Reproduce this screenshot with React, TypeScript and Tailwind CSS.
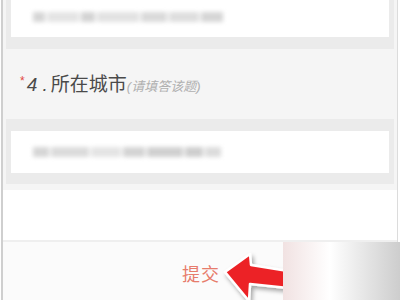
export default function App() {
  return (
    <div
      className="relative w-[400px] h-[300px] overflow-hidden bg-white"
      style={{ fontFamily: '"Liberation Sans", "Noto Sans CJK SC", sans-serif' }}
    >
      <div className="flex flex-col h-full ml-[1px] mr-[2px] border-l-2 border-r border-l-[#cfcfcf] border-r-[#dcdcdc]">
        {/* question area */}
        <div className="bg-[#f5f5f5] pt-0 pb-[6px] px-[3px]">
          <div className="bg-[#ebebeb] pb-[12px] px-[5px]">
            <div className="bg-white h-[37px] flex items-center pl-[22px] pb-[4px]">
              <div className="flex gap-[2px] blur-[2px]">
                <div className="w-[12px] h-[10px] bg-[#d6d6d6]" />
                <div className="w-[32px] h-[10px] bg-[#e4e4e4]" />
                <div className="w-[14px] h-[10px] bg-[#d4d4d4]" />
                <div className="w-[42px] h-[10px] bg-[#e2e2e2]" />
                <div className="w-[26px] h-[10px] bg-[#dadada]" />
                <div className="w-[30px] h-[10px] bg-[#dedede]" />
                <div className="w-[22px] h-[10px] bg-[#d6d6d6]" />
              </div>
            </div>
          </div>
          <div className="flex items-baseline h-[70px] pt-[22px] pl-[14px]">
            <span className="text-[12px] text-[#e2483e] relative top-[-6px]">*</span>
            <span className="text-[19px] text-[#4a4a4a] italic ml-[2px]">4 .</span>
            <span className="text-[19px] text-[#4a4a4a] ml-[3px]">所在城市</span>
            <span className="text-[13px] text-[#b0b0b0] italic">(请填答该题)</span>
          </div>
          <div className="bg-[#ebebeb] pt-[12px] pb-[11px] px-[5px]">
            <div className="bg-white h-[42px] flex items-center pl-[22px]">
              <div className="flex gap-[2px] blur-[2px]">
                <div className="w-[16px] h-[10px] bg-[#d6d6d6]" />
                <div className="w-[38px] h-[10px] bg-[#dbdbdb]" />
                <div className="w-[30px] h-[10px] bg-[#e4e4e4]" />
                <div className="w-[22px] h-[10px] bg-[#d4d4d4]" />
                <div className="w-[36px] h-[10px] bg-[#d0d0d0]" />
                <div className="w-[18px] h-[10px] bg-[#cecece]" />
                <div className="w-[16px] h-[10px] bg-[#dcdcdc]" />
              </div>
            </div>
          </div>
        </div>
        {/* blank */}
        <div className="h-[52px] bg-white border-b-2 border-[#efefef]" />
        {/* footer */}
        <div className="flex-1 bg-[#fbfbfb] flex items-start justify-center pt-[20px] pl-[2px]">
          <span className="text-[18px] text-[#e77c6c] tracking-[1px]">提交</span>
        </div>
      </div>

      {/* red arrow */}
      <svg className="absolute left-[218px] top-[248px]" width="80" height="56" viewBox="0 0 80 56">
        <defs>
          <filter id="sh" x="-20%" y="-20%" width="150%" height="150%">
            <feDropShadow dx="2" dy="3" stdDeviation="2" floodColor="#000" floodOpacity="0.35" />
          </filter>
        </defs>
        <path
          d="M7 24 L32 6 L33 17 L70 23 L70 40 L32 36 L31 53 Z"
          fill="#ec2427"
          stroke="#ffffff"
          strokeWidth="2.5"
          strokeLinejoin="round"
          filter="url(#sh)"
        />
      </svg>

      {/* overlay gradient patch */}
      <div className="absolute left-[283px] top-[242px] w-[117px] h-[58px] bg-gradient-to-r from-[#f1e2e2] via-white via-40% to-[#cdcdcd]" />
    </div>
  );
}
